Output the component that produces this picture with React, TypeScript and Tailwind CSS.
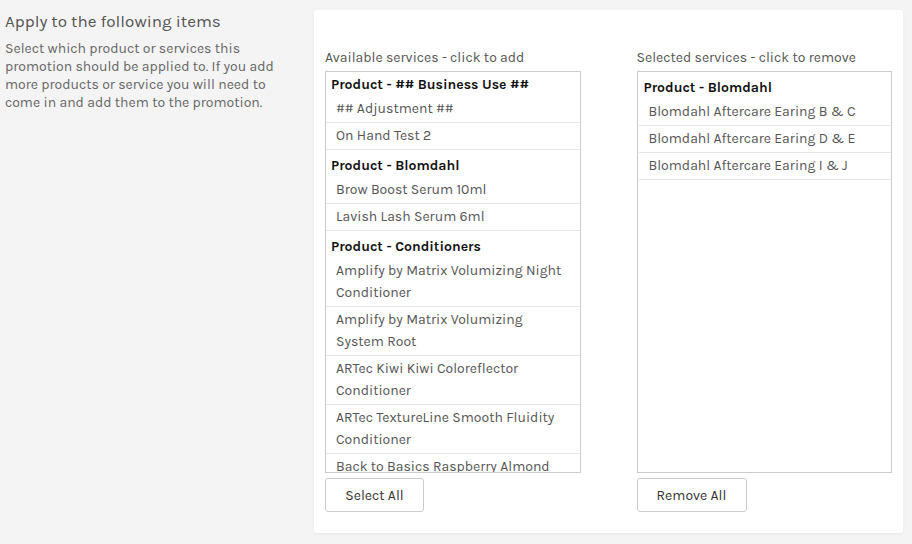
import React from "react";

type Row = { kind: "group" | "item"; label: string };

const available: Row[] = [
  { kind: "group", label: "Product - ## Business Use ##" },
  { kind: "item", label: "## Adjustment ##" },
  { kind: "item", label: "On Hand Test 2" },
  { kind: "group", label: "Product - Blomdahl" },
  { kind: "item", label: "Brow Boost Serum 10ml" },
  { kind: "item", label: "Lavish Lash Serum 6ml" },
  { kind: "group", label: "Product - Conditioners" },
  { kind: "item", label: "Amplify by Matrix Volumizing Night Conditioner" },
  { kind: "item", label: "Amplify by Matrix Volumizing System Root" },
  { kind: "item", label: "ARTec Kiwi Kiwi Coloreflector Conditioner" },
  { kind: "item", label: "ARTec TextureLine Smooth Fluidity Conditioner" },
  { kind: "item", label: "Back to Basics Raspberry Almond Conditioner" },
];

const selected: Row[] = [
  { kind: "group", label: "Product - Blomdahl" },
  { kind: "item", label: "Blomdahl Aftercare Earing B & C" },
  { kind: "item", label: "Blomdahl Aftercare Earing D & E" },
  { kind: "item", label: "Blomdahl Aftercare Earing I & J" },
];

function ListBox({ rows, scrolled }: { rows: Row[]; scrolled?: boolean }) {
  return (
    <div className="h-[402px] overflow-hidden border border-[#cccccc] bg-white">
      {/* the left list is scrolled down a few pixels in the shot */}
      <div className={scrolled ? "-mt-[3px]" : "pl-px"}>
        {rows.map((r, i) =>
          r.kind === "group" ? (
            <div key={i} className="pt-[5px] pl-[5px] pr-2 text-[14px] leading-[22px] font-bold text-[#111]">
              {r.label}
            </div>
          ) : (
            <div
              key={i}
              className="cursor-pointer border-b border-[#e6e6e6] pt-[2px] pb-[2px] pl-[10px] pr-3 text-[14px] leading-[22px] text-[#555]"
            >
              {r.label}
            </div>
          )
        )}
      </div>
    </div>
  );
}

export default function App() {
  return (
    <div
      className="flex min-h-[544px] w-full bg-[#f4f4f4]"
      style={{ fontFamily: "Karla, Lato, 'Open Sans', sans-serif" }}
    >
      <div className="w-[314px] shrink-0 pl-[5px] pr-[20px] pt-[10px]">
        <h2 className="text-[17px] leading-[22px] text-[#555]">Apply to the following items</h2>
        <p className="mt-[8px] text-[14px] leading-[18px] text-[#666]">
          Select which product or services this promotion should be applied to. If you add more products or service you
          will need to come in and add them to the promotion.
        </p>
      </div>
      <div className="mt-[10px] mr-[9px] mb-[12px] flex-1 rounded-[3px] bg-white px-[11px] pt-[39px] pb-[21px] shadow-[0_1px_3px_rgba(0,0,0,0.06)]">
        <div className="grid grid-cols-2 gap-x-[56px]">
          <div>
            <div className="mb-[5px] text-[14px] leading-[17px] text-[#555]">Available services - click to add</div>
            <ListBox rows={available} scrolled />
            <button className="mt-[5px] h-[34px] w-[99px] rounded-[3px] border border-[#cccccc] bg-white text-[14px] text-[#333]">
              Select All
            </button>
          </div>
          <div>
            <div className="mb-[5px] text-[14px] leading-[17px] text-[#555]">Selected services - click to remove</div>
            <ListBox rows={selected} />
            <button className="mt-[5px] h-[34px] w-[110px] rounded-[3px] border border-[#cccccc] bg-white text-[14px] text-[#333]">
              Remove All
            </button>
          </div>
        </div>
      </div>
    </div>
  );
}
